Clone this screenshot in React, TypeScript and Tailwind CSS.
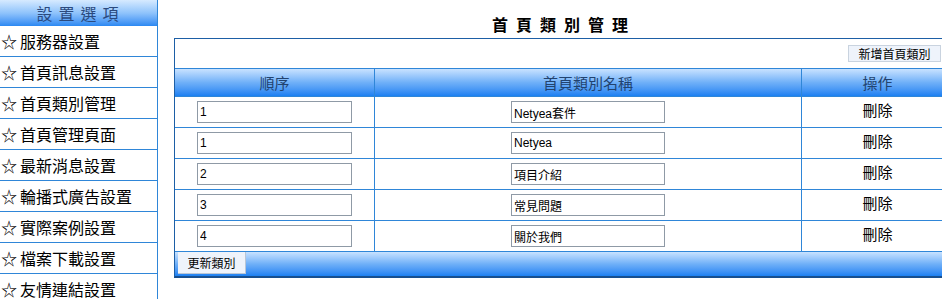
import React from 'react'

const MENU = [
  "服務器設置",
  "首頁訊息設置",
  "首頁類別管理",
  "首頁管理頁面",
  "最新消息設置",
  "輪播式廣告設置",
  "實際案例設置",
  "檔案下載設置",
  "友情連結設置",
]

const ROWS = [
  { order: "1", name: "Netyea套件" },
  { order: "1", name: "Netyea" },
  { order: "2", name: "項目介紹" },
  { order: "3", name: "常見問題" },
  { order: "4", name: "關於我們" },
]

const font = "font-['Noto_Sans_CJK_TC','Liberation_Sans',sans-serif]"

export default function App() {
  return (
    <div className={`w-[942px] h-[299px] overflow-hidden bg-white flex ${font}`}>
      {/* sidebar */}
      <div className="w-[158px] shrink-0 flex flex-col border-r border-[#2f86d8]">
        <div className="h-[26px] shrink-0 flex items-center justify-center pl-[4px] bg-gradient-to-b from-[#d6eaff] via-[#8fc3fb] to-[#2a88f2] text-[16px] tracking-[6px] text-[#2b4a7e] leading-none">
          設置選項
        </div>
        {MENU.map((m) => (
          <div key={m} className="h-[31px] shrink-0 flex items-center pl-[1px] pb-[1px] border-b border-[#2f86d8] text-[16px] text-black leading-none">
            <span className="mr-[3px] text-[16px]">☆</span>
            {m}
          </div>
        ))}
      </div>

      {/* main */}
      <div className="flex-1 min-w-0 pl-[16px]">
        <div className="w-[780px] h-[38px] flex items-center justify-center text-[16px] font-bold tracking-[8px] text-black pt-[10px]">
          首頁類別管理
        </div>
        <div className="w-[780px] border border-[#1d5fa6] border-b-2 border-b-[#174f8f]">
          <div className="h-[30px] flex items-center justify-end pr-[12px] border-b border-[#2f86d8]">
            <button className="h-[17px] w-[93px] flex items-center justify-center bg-[#eef3fb] border border-[#c9d3df] text-[12px] text-black leading-none">
              新增首頁類別
            </button>
          </div>
          <div className="h-[27px] flex bg-gradient-to-b from-[#c8e2ff] via-[#6fb0f8] to-[#1a80f2] text-[15px] text-[#22436f] leading-none">
            <div className="w-[200px] flex items-center justify-center border-r border-[#2f86d8]">順序</div>
            <div className="w-[427px] flex items-center justify-center border-r border-[#2f86d8]">首頁類別名稱</div>
            <div className="flex-1 flex items-center justify-center">操作</div>
          </div>
          {ROWS.map((r, i) => (
            <div key={i} className="h-[31px] flex border-t border-[#2f86d8]">
              <div className="w-[200px] flex items-center justify-center border-r border-[#2f86d8]">
                <input readOnly value={r.order} className="w-[155px] h-[22px] border border-[#8f9aa6] px-[2px] text-[12px] text-black outline-none font-['Liberation_Sans','Noto_Sans_CJK_TC',sans-serif]" />
              </div>
              <div className="w-[427px] flex items-center justify-center border-r border-[#2f86d8]">
                <input readOnly value={r.name} className="w-[154px] h-[22px] border border-[#8f9aa6] px-[2px] text-[12px] text-black outline-none font-['Liberation_Sans','Noto_Sans_CJK_TC',sans-serif]" />
              </div>
              <div className="flex-1 flex items-center justify-center text-[15px] text-black leading-none pb-[6px]">刪除</div>
            </div>
          ))}
          <div className="h-[25px] flex items-start border-t border-[#2f86d8] bg-gradient-to-b from-[#c8e2ff] via-[#6fb0f8] to-[#1a80f2] pl-[3px]">
            <button className="h-[22px] w-[68px] flex items-center justify-center bg-[#eef3fb] border-r border-b border-[#b9c6d6] text-[12px] text-black leading-none">
              更新類別
            </button>
          </div>
        </div>
      </div>
    </div>
  )
}
